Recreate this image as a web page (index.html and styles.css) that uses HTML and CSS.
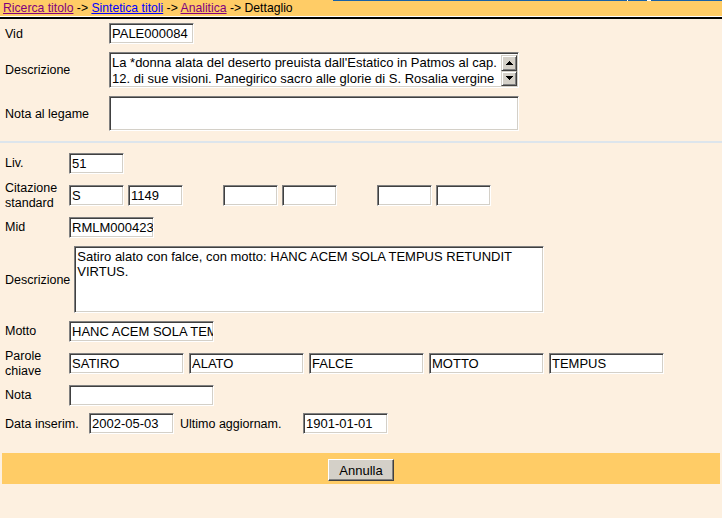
FILE: index.html
```html
<!DOCTYPE html>
<html lang="it">
<head>
<meta charset="utf-8">
<title>Dettaglio</title>
<link rel="stylesheet" href="styles.css">
</head>
<body>
<header class="head">
  <div class="edge"><span class="edge-pad"></span><span class="edge-blue seg1"></span><span class="edge-gap"></span><span class="edge-blue seg2"></span><span class="edge-gap wide"></span><span class="edge-blue fill"></span></div>
  <nav class="crumbs"><a class="visited" href="#">Ricerca titolo</a> -&gt; <a class="link" href="#">Sintetica titoli</a> -&gt; <a class="visited" href="#">Analitica</a> -&gt; Dettaglio</nav>
</header>
<div class="rule"></div>
<form class="form">
  <section class="sec1">
    <div class="row"><label class="lab1">Vid</label><input class="fld w85" value="PALE000084"></div>
    <div class="row gap8"><label class="lab1">Descrizione</label>
      <div class="tabox sunken">
        <textarea class="ta ta-first" readonly>La *donna alata del deserto preuista dall'Estatico in Patmos al cap.
12. di sue visioni. Panegirico sacro alle glorie di S. Rosalia vergine
palermitana.</textarea>
        <div class="vscroll">
          <span class="sbtn"><svg width="7" height="4" viewBox="0 0 7 4" shape-rendering="crispEdges"><path d="M3 0h1v1h1v1h1v1h1v1H0V3h1V2h1V1h1z" fill="#000"/></svg></span>
          <span class="sbtn"><svg width="7" height="4" viewBox="0 0 7 4" shape-rendering="crispEdges"><path d="M0 0h7v1H6v1H5v1H4v1H3V3H2V2H1V1H0z" fill="#000"/></svg></span>
        </div>
      </div>
    </div>
    <div class="row gap8"><label class="lab1">Nota al legame</label><textarea class="ta sunken ta-nota"></textarea></div>
  </section>
  <div class="sep"></div>
  <section class="sec2">
    <div class="row"><label class="lab2">Liv.</label><input class="fld w55" value="51"></div>
    <div class="row gap11"><label class="lab2">Citazione standard</label>
      <div class="pairs">
        <div class="pair"><input class="fld w55" value="S"><input class="fld w55" value="1149"></div>
        <div class="pair"><input class="fld w55" value=""><input class="fld w55" value=""></div>
        <div class="pair"><input class="fld w55" value=""><input class="fld w55" value=""></div>
      </div>
    </div>
    <div class="row gap11"><label class="lab2">Mid</label><input class="fld w85" value="RMLM000423"></div>
    <div class="row gap8"><label class="lab-auto">Descrizione</label><textarea class="ta sunken ta-desc2" readonly>Satiro alato con falce, con motto: HANC ACEM SOLA TEMPUS RETUNDIT
VIRTUS.</textarea></div>
    <div class="row gap8"><label class="lab2">Motto</label><input class="fld w145" value="HANC ACEM SOLA TEMPUS RETUNDIT VIRTUS"></div>
    <div class="row gap11"><label class="lab2">Parole chiave</label>
      <div class="keys">
        <input class="fld w115" value="SATIRO"><input class="fld w115" value="ALATO"><input class="fld w115" value="FALCE"><input class="fld w115" value="MOTTO"><input class="fld w115" value="TEMPUS">
      </div>
    </div>
    <div class="row gap11"><label class="lab2">Nota</label><input class="fld w145" value=""></div>
    <div class="row gap7"><label class="lab-data">Data inserim.</label><input class="fld w85" value="2002-05-03"><label class="lab-agg">Ultimo aggiornam.</label><input class="fld w85" value="1901-01-01"></div>
  </section>
  <div class="bar"><button type="button" class="btn">Annulla</button></div>
</form>
</body>
</html>
```
FILE: styles.css
```css
html, body {
  margin: 0;
  padding: 0;
}
body {
  background: #fdf0e0;
  font-family: "Liberation Sans", Arial, sans-serif;
  font-size: 12.5px;
  color: #000;
  width: 722px;
}
.head {
  background: #ffcc66;
}
.edge {
  display: flex;
  height: 1px;
}
.edge-pad { width: 333px; }
.edge-blue { background: #1862a8; }
.seg1 { width: 294px; }
.seg2 { width: 19px; }
.edge-gap { width: 1px; background: #fff; }
.edge-gap.wide { width: 4px; }
.edge-blue.fill { flex: 1; }
.crumbs {
  height: 15px;
  line-height: 15px;
  padding-left: 3px;
  font-size: 12.2px;
  white-space: nowrap;
}
.crumbs a { text-decoration: underline; }
.crumbs .visited { color: #800080; }
.crumbs .link { color: #0000ff; }
.rule {
  height: 2px;
  background: #000;
  border-top: 1px solid #fff;
}
.sec1 {
  padding: 4px 0 0 5px;
}
.sec2 {
  padding: 10px 0 0 5px;
}
.row {
  display: flex;
  align-items: center;
}
.gap7 { margin-top: 7px; }
.gap8 { margin-top: 8px; }
.gap11 { margin-top: 11px; }
.lab1 { width: 104px; flex: none; }
.lab2 {
  width: 64px;
  flex: none;
  height: 21px;
  display: flex;
  align-items: center;
  line-height: 15px;
}
.lab-auto { flex: none; margin-right: 4px; }
.lab-data { width: 84px; flex: none; }
.lab-agg { width: 123px; flex: none; margin-left: 6px; }
.sunken {
  box-sizing: border-box;
  border: 1px solid;
  border-color: #808080 #ffffff #ffffff #808080;
  box-shadow: inset 1px 1px 0 #404040, inset -1px -1px 0 #d4d0c8;
  background: #fff;
}
.fld {
  box-sizing: border-box;
  height: 21px;
  margin: 0;
  padding: 0 0 0 2px;
  border: 1px solid;
  border-color: #808080 #ffffff #ffffff #808080;
  box-shadow: inset 1px 1px 0 #404040, inset -1px -1px 0 #d4d0c8;
  background: #fff;
  font-family: "Liberation Sans", Arial, sans-serif;
  font-size: 13px;
  color: #000;
  outline: none;
}
.w55 { width: 55px; }
.w85 { width: 85px; }
.w115 { width: 115px; }
.w145 { width: 145px; }
.ta {
  margin: 0;
  resize: none;
  overflow: hidden;
  font-family: "Liberation Sans", Arial, sans-serif;
  font-size: 13px;
  color: #000;
  white-space: pre;
  outline: none;
}
.tabox {
  display: flex;
  width: 410px;
  height: 36px;
  padding: 1px;
}
.ta-first {
  flex: 1;
  min-width: 0;
  border: 0;
  padding: 1px 0 0 1px;
  line-height: 16px;
  background: #fff;
}
.vscroll {
  width: 16px;
  flex: none;
  display: flex;
  flex-direction: column;
  margin-top: 1px;
}
.sbtn {
  box-sizing: border-box;
  width: 16px;
  height: 16px;
  display: flex;
  align-items: center;
  justify-content: center;
  background: #d4d0c8;
  border: 1px solid;
  border-color: #d4d0c8 #404040 #404040 #d4d0c8;
  box-shadow: inset 1px 1px 0 #ffffff, inset -1px -1px 0 #808080;
}
.ta-nota {
  width: 410px;
  height: 35px;
  padding: 2px;
}
.ta-desc2 {
  width: 470px;
  height: 67px;
  padding: 2px;
  line-height: 15px;
}
.pairs {
  display: flex;
  gap: 40px;
}
.pair {
  display: flex;
  gap: 4px;
}
.keys {
  display: flex;
  gap: 5px;
}
.sep {
  height: 2px;
  margin-top: 10px;
  background: #dde5ec;
}
.bar {
  margin: 19px 2px 0;
  height: 31px;
  box-sizing: border-box;
  padding-top: 6px;
  background: #ffcc66;
  display: flex;
  justify-content: center;
  align-items: flex-start;
}
.btn {
  box-sizing: border-box;
  width: 66px;
  height: 22px;
  margin: 0;
  padding: 0;
  background: #d4d0c8;
  border: 1px solid;
  border-color: #ffffff #404040 #404040 #ffffff;
  box-shadow: inset -1px -1px 0 #808080;
  font-family: "Liberation Sans", Arial, sans-serif;
  font-size: 13px;
  color: #000;
}
```
